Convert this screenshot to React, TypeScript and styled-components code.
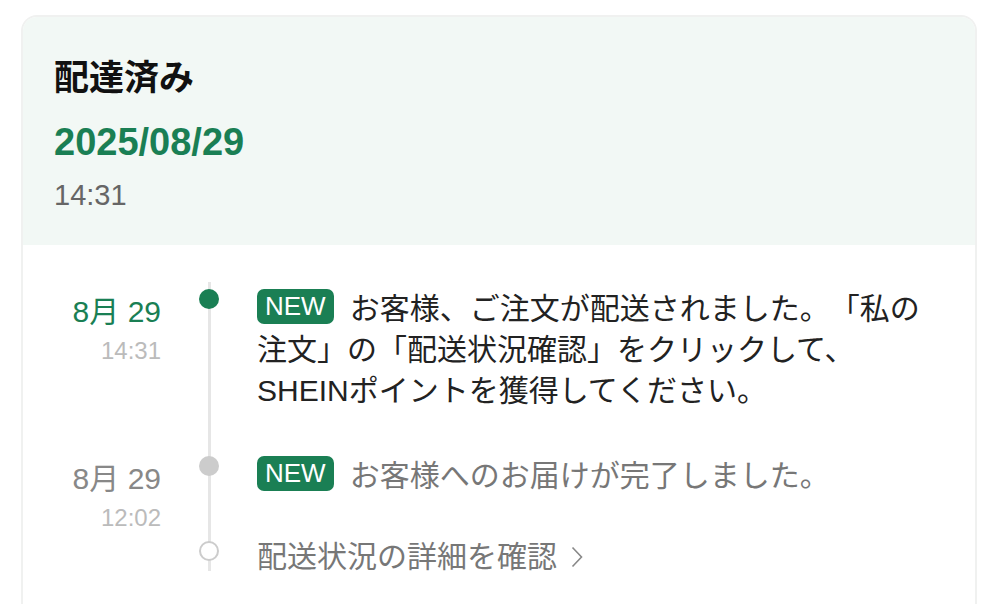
import styled, { createGlobalStyle } from 'styled-components';

const GlobalStyle = createGlobalStyle`
  html, body {
    margin: 0;
    padding: 0;
    background: #ffffff;
    overflow: hidden;
  }
  body {
    font-family: 'Liberation Sans', 'Noto Sans CJK JP', sans-serif;
    color: #222222;
    text-spacing-trim: space-all;
  }
`;

const GREEN = '#1a7f54';

const Page = styled.div`
  padding: 15px 22px 0 21px;
  height: 604px;
  box-sizing: border-box;
`;

const Card = styled.div`
  border: 2px solid #f0f1f0;
  border-bottom: none;
  border-radius: 16px 16px 0 0;
  overflow: hidden;
  min-height: 620px;
  background: #ffffff;
`;

const Header = styled.div`
  background: #f2f8f5;
  padding: 40px 32px 32px 31px;
  display: flex;
  flex-direction: column;
`;

const Status = styled.h1`
  margin: 0;
  font-size: 35px;
  line-height: 42px;
  font-weight: 700;
  color: #111111;
`;

const DeliveredDate = styled.div`
  margin-top: 21px;
  font-size: 38px;
  line-height: 44px;
  font-weight: 700;
  color: ${GREEN};
`;

const DeliveredTime = styled.div`
  margin-top: 13px;
  font-size: 29px;
  line-height: 36px;
  color: #666666;
`;

const Timeline = styled.div`
  padding-top: 37px;
  display: flex;
  flex-direction: column;
`;

const Row = styled.div`
  display: grid;
  grid-template-columns: 138px 40px 1fr;
  column-gap: 28px;
`;

const DateCol = styled.div`
  display: flex;
  flex-direction: column;
  align-items: flex-end;
  padding-top: 12px;
`;

const Day = styled.div<{ $active?: boolean }>`
  font-size: 30px;
  line-height: 36px;
  color: ${({ $active }) => ($active ? GREEN : '#888888')};
`;

const Clock = styled.div`
  margin-top: 6px;
  font-size: 24px;
  line-height: 30px;
  color: #bbbbbb;
`;

const Track = styled.div<{ $last?: boolean }>`
  position: relative;
  display: flex;
  justify-content: center;

  &::before {
    content: '';
    position: absolute;
    left: 50%;
    top: 0;
    bottom: ${({ $last }) => ($last ? '6px' : '0')};
    width: 3px;
    margin-left: -1.5px;
    background: #e6e6e6;
  }
`;

const Dot = styled.span<{ $kind: 'active' | 'done' | 'open' }>`
  position: relative;
  z-index: 1;
  box-sizing: border-box;
  width: 20px;
  height: 20px;
  margin-top: 7px;
  border-radius: 50%;
  background: ${({ $kind }) =>
    $kind === 'active' ? GREEN : $kind === 'done' ? '#cccccc' : '#ffffff'};
  border: ${({ $kind }) => ($kind === 'open' ? '2px solid #cccccc' : 'none')};
`;

const Content = styled.div<{ $muted?: boolean; $last?: boolean }>`
  padding: ${({ $last }) => ($last ? '2px 35px 0 0' : '6px 35px 38px 0')};
  font-size: 30px;
  line-height: 41px;
  color: ${({ $muted }) => ($muted ? '#777777' : '#222222')};
`;

const Badge = styled.span`
  display: inline-block;
  vertical-align: top;
  margin-top: 1px;
  margin-right: 16px;
  padding: 0 8px;
  height: 35px;
  line-height: 35px;
  border-radius: 7px;
  background: ${GREEN};
  color: #ffffff;
  font-size: 26px;
  font-family: 'Liberation Sans', sans-serif;
`;

const DetailLink = styled.a`
  display: inline-flex;
  align-items: center;
  gap: 14px;
  color: #777777;
  text-decoration: none;
`;

const Chevron = () => (
  <svg width="12" height="22" viewBox="0 0 12 22" fill="none">
    <polyline points="1.5,1.5 10.5,11 1.5,20.5" stroke="#888888" strokeWidth="1.6" />
  </svg>
);

export default function App() {
  return (
    <Page>
      <GlobalStyle />
      <Card>
        <Header>
          <Status>配達済み</Status>
          <DeliveredDate>2025/08/29</DeliveredDate>
          <DeliveredTime>14:31</DeliveredTime>
        </Header>
        <Timeline>
          <Row>
            <DateCol>
              <Day $active>8月 29</Day>
              <Clock>14:31</Clock>
            </DateCol>
            <Track>
              <Dot $kind="active" />
            </Track>
            <Content>
              <Badge>NEW</Badge>
              お客様、ご注文が配送されました。「私の注文」の「配送状況確認」をクリックして、SHEINポイントを獲得してください。
            </Content>
          </Row>
          <Row>
            <DateCol>
              <Day>8月 29</Day>
              <Clock>12:02</Clock>
            </DateCol>
            <Track>
              <Dot $kind="done" />
            </Track>
            <Content $muted>
              <Badge>NEW</Badge>
              お客様へのお届けが完了しました。
            </Content>
          </Row>
          <Row>
            <div />
            <Track $last>
              <Dot $kind="open" />
            </Track>
            <Content $muted $last>
              <DetailLink href="#">
                配送状況の詳細を確認
                <Chevron />
              </DetailLink>
            </Content>
          </Row>
        </Timeline>
      </Card>
    </Page>
  );
}
